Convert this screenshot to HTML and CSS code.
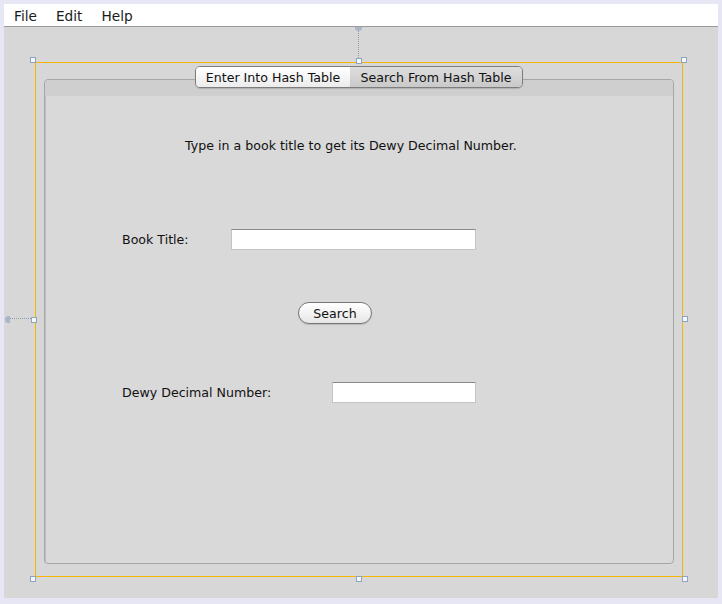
FILE: index.html
```html
<!DOCTYPE html>
<html>
<head>
<meta charset="utf-8">
<link rel="stylesheet" href="styles.css">
</head>
<body>
<div class="window">
  <div class="menubar">
    <span class="menu">File</span>
    <span class="menu">Edit</span>
    <span class="menu">Help</span>
  </div>
  <div class="canvas">
    <div class="guide guide-top"></div>
    <div class="guide-blob blob-top"></div>
    <div class="guide guide-left"></div>
    <div class="guide-blob blob-left"></div>
    <div class="handle h-tl"></div>
    <div class="handle h-tm"></div>
    <div class="handle h-tr"></div>
    <div class="handle h-ml"></div>
    <div class="handle h-mr"></div>
    <div class="handle h-bl"></div>
    <div class="handle h-bm"></div>
    <div class="handle h-br"></div>
    <div class="selection">
      <div class="tabs">
        <div class="tab tab-first">Enter Into Hash Table</div>
        <div class="tab tab-second">Search From Hash Table</div>
      </div>
      <div class="panel">
        <div class="panel-band"></div>
        <div class="panel-body">
          <p class="intro">Type in a book title to get its Dewy Decimal Number.</p>
          <div class="row row-title">
            <span class="label">Book Title:</span>
            <input class="field field-title" type="text">
          </div>
          <div class="button-row">
            <button class="btn">Search</button>
          </div>
          <div class="row row-dewey">
            <span class="label">Dewy Decimal Number:</span>
            <input class="field field-dewey" type="text">
          </div>
        </div>
      </div>
    </div>
  </div>
</div>
</body>
</html>
```

FILE: styles.css
```css
* { box-sizing: border-box; }
html, body { margin: 0; padding: 0; }
body {
  width: 722px;
  height: 604px;
  background: #e6e6f5;
  padding: 4px 4px 6px 4px;
  font-family: "DejaVu Sans", "Liberation Sans", sans-serif;
  color: #111;
  overflow: hidden;
}
.window {
  width: 714px;
  height: 594px;
  background: #d7d7d7;
  display: flex;
  flex-direction: column;
}
.menubar {
  height: 23px;
  background: #fff;
  border-bottom: 1px solid #9a9a9a;
  display: flex;
  align-items: center;
  padding: 2px 0 0 10px;
  gap: 19px;
  font-size: 13.7px;
  color: #1a1a1a;
}
.canvas {
  position: relative;
  flex: 1;
  padding: 35px 0 0 31px;
}
.guide { position: absolute; }
.guide-top {
  left: 354px; top: 2px; width: 1px; height: 29px;
  border-left: 1px dotted #8f9db3;
}
.blob-top {
  position: absolute; left: 351px; top: 0; width: 7px; height: 4px;
  border-radius: 0 0 4px 4px; background: #aab6c8;
}
.guide-left {
  left: 4px; top: 291px; width: 23px; height: 1px;
  border-top: 1px dotted #8f9db3;
}
.blob-left {
  position: absolute; left: 1px; top: 289px; width: 5px; height: 7px;
  border-radius: 4px 0 0 4px; background: #aab6c8;
}
.handle {
  position: absolute;
  width: 6px; height: 6px;
  background: #f4f7fb;
  border: 1px solid #8ea4be;
  z-index: 3;
}
.h-tl { left: 26px; top: 30px; }
.h-tm { left: 352px; top: 31px; }
.h-tr { left: 677px; top: 30px; }
.h-ml { left: 27px; top: 290px; }
.h-mr { left: 678px; top: 289px; }
.h-bl { left: 26px; top: 549px; }
.h-bm { left: 352px; top: 549px; }
.h-br { left: 678px; top: 549px; }

.selection {
  width: 648px;
  height: 515px;
  border: 1px solid #f7b400;
  padding: 3px 8px 12px 8px;
  display: flex;
  flex-direction: column;
  align-items: stretch;
}
.tabs {
  position: relative;
  z-index: 2;
  align-self: flex-start;
  margin-left: 151px;
  display: flex;
  height: 22px;
  border: 1px solid #7d7d7d;
  border-radius: 5px;
  overflow: hidden;
  box-shadow: 0 1px 1px rgba(0,0,0,0.15);
  font-size: 12.6px;
}
.tab {
  display: flex;
  align-items: center;
  justify-content: center;
  height: 100%;
  color: #111;
}
.tab-first {
  width: 154px;
  background: linear-gradient(#ffffff, #ececec);
}
.tab-second {
  width: 172px;
  background: linear-gradient(#dedede, #c9c9c9);
}
.panel {
  margin-top: -9px;
  width: 630px;
  height: 485px;
  border: 1px solid #a6a6a6;
  border-radius: 4px;
  background: #d9d9d9;
  box-shadow: inset 1px 1px 0 #bfbfbf;
  display: flex;
  flex-direction: column;
  overflow: hidden;
}
.panel-band {
  height: 16px;
  background: #cfcfcf;
  flex: none;
}
.panel-body {
  flex: 1;
  padding-left: 77px;
  font-size: 12.6px;
}
.intro {
  margin: 42px 0 0 -77px;
  padding-right: 16px;
  text-align: center;
  line-height: 16px;
}
.row {
  display: flex;
  align-items: center;
}
.row-title { margin-top: 75px; }
.field {
  height: 21px;
  background: #fff;
  border: 1px solid #c4c4c4;
  border-top-color: #8a8a8a;
  padding: 0;
  margin: 0;
}
.label { white-space: nowrap; }
.row-title .label { width: 109px; }
.field-title { width: 245px; }
.row-dewey .label { width: 210px; }
.field-dewey { width: 144px; }
.button-row {
  margin-top: 52px;
  padding-left: 176px;
  height: 22px;
}
.btn {
  width: 74px;
  height: 22px;
  border: 1px solid #777;
  border-radius: 11px;
  background: linear-gradient(#ffffff, #e6e6e6);
  font-family: inherit;
  font-size: 12.6px;
  color: #111;
  padding: 0;
  box-shadow: 0 1px 1px rgba(0,0,0,0.15);
}
.row-dewey { margin-top: 58px; }
```
